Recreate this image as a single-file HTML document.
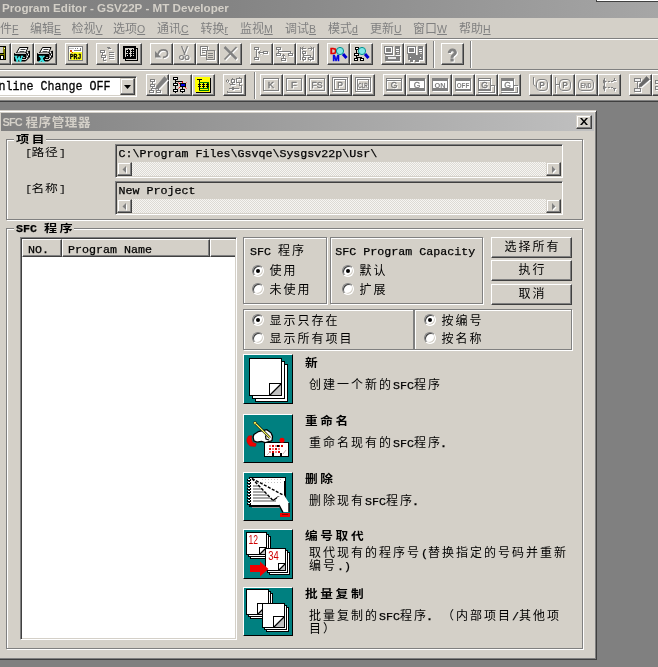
<!DOCTYPE html>
<html lang="zh"><head><meta charset="utf-8"><title>SFC</title>
<style>
*{box-sizing:border-box;margin:0;padding:0}
html,body{width:658px;height:667px;overflow:hidden;background:#808080}
body{position:relative;font-family:"Liberation Mono","Noto Sans CJK SC",monospace;font-size:12px;color:#000;line-height:14px}
.a{position:absolute;white-space:nowrap}
.face{background:#d4d0c8}
.ui{font-family:"Liberation Sans","Noto Sans CJK SC",sans-serif}
.mono{font-family:"Liberation Mono","Noto Sans CJK SC",monospace;font-size:11.67px;letter-spacing:0;-webkit-text-stroke:0.25px #000}
.cj{letter-spacing:2px;font-size:12px;font-weight:400}
.b{font-weight:bold}
  .br{display:inline-block;width:5px;font-size:9.5px;-webkit-text-stroke:0;position:relative;top:-0.5px}
.bh{font-weight:700;font-size:12px;letter-spacing:3.4px}
.raised{background:#d4d0c8;border:1px solid;border-color:#fff #404040 #404040 #fff;box-shadow:inset -1px -1px 0 #808080}
.raised2{background:#d4d0c8;border:1px solid;border-color:#d4d0c8 #404040 #404040 #d4d0c8;box-shadow:inset -1px -1px 0 #808080,inset 1px 1px 0 #fff}
.sunken{border:1px solid;border-color:#808080 #fff #fff #808080;box-shadow:inset 1px 1px 0 #404040,inset -1px -1px 0 #d4d0c8}
.etch{border:1px solid #808080;box-shadow:1px 1px 0 #fff,inset 1px 1px 0 #fff}
.tb{position:absolute;width:23px;height:22px;background:#d4d0c8;border:1px solid;border-color:#fff #404040 #404040 #fff;box-shadow:inset -1px -1px 0 #808080}
.tb svg{position:absolute;left:-1px;top:-1px}
.radio{position:absolute;width:12px;height:12px;border-radius:50%;background:#fff;border:1px solid;border-color:#808080 #fff #fff #808080;box-shadow:inset 1px 1px 0 #404040,inset -1px -1px 0 #d4d0c8}
.radio.on::after{content:"";position:absolute;left:3px;top:3px;width:4px;height:4px;border-radius:50%;background:#000}
.dither{background:repeating-conic-gradient(#f6f5f2 0 25%,#dddad4 0 50%) 0 0/2px 2px}
.m{position:absolute;top:21px;height:16px;color:#808080;font-size:12px;line-height:16px;white-space:nowrap}
.m u{text-decoration:underline;font-size:10.5px}
.ico{position:absolute;left:243px;width:50px;background:#008080;border:1px solid;border-color:#fff #000 #000 #fff;overflow:hidden}
</style></head>
<body>
<div style="position:absolute;left:0;top:0;width:658px;height:667px;will-change:transform">
<div class="a" style="left:0;top:0;width:658px;height:18px;background:linear-gradient(to right,#808080 0%,#848484 35%,#a6a6a6 100%)"></div>
<div class="a ui b" style="left:2px;top:1px;font-size:11.65px;line-height:14px;color:#d4d0c8">Program Editor - GSV22P - MT Developer</div>
<div class="a" style="left:596px;top:-2px;width:70px;height:4px;background:#fff;border:1px solid #404040"></div>
<div class="a face" style="left:0;top:18px;width:658px;height:83px"></div>
<div class="m ui" style="left:-12px">文件<u>F</u></div>
<div class="m ui" style="left:30px">编辑<u>E</u></div>
<div class="m ui" style="left:71.5px">检视<u>V</u></div>
<div class="m ui" style="left:113px">选项<u>O</u></div>
<div class="m ui" style="left:157px">通讯<u>C</u></div>
<div class="m ui" style="left:200.5px">转换<u>r</u></div>
<div class="m ui" style="left:240px">监视<u>M</u></div>
<div class="m ui" style="left:285px">调试<u>B</u></div>
<div class="m ui" style="left:328px">模式<u>d</u></div>
<div class="m ui" style="left:370px">更新<u>U</u></div>
<div class="m ui" style="left:413px">窗口<u>W</u></div>
<div class="m ui" style="left:459px">帮助<u>H</u></div>
<div class="a" style="left:0;top:38px;width:658px;height:1px;background:#808080"></div>
<div class="a" style="left:0;top:39px;width:658px;height:1px;background:#fff"></div>
<div class="a" style="left:0;top:69px;width:658px;height:1px;background:#808080"></div>
<div class="a" style="left:0;top:70px;width:658px;height:1px;background:#fff"></div>
<div class="a" style="left:0;top:100px;width:658px;height:1px;background:#808080"></div>
<div class="a" style="left:0;top:101px;width:658px;height:1px;background:#404040"></div>
<div class="tb" style="left:-12px;top:43px"><svg width="23" height="22" viewBox="0 0 23 22" shape-rendering="crispEdges"><rect x="3.5" y="3.5" width="14" height="13" fill="#808000" stroke="#000"/><rect x="6" y="4" width="9" height="6" fill="#d4d0c8"/><rect x="4" y="10" width="12" height="1" fill="#000"/><rect x="7" y="12" width="9" height="5" fill="#000"/><rect x="13" y="13" width="2" height="3" fill="#fff"/><rect x="16" y="5" width="1" height="1" fill="#fff"/></svg></div>
<div class="tb" style="left:11px;top:43px"><svg width="23" height="22" viewBox="0 0 23 22" shape-rendering="crispEdges"><path d="M3.5 10.5H14.5L18.5 8V14L14.5 18H3.5Z" stroke="#000" fill="#000" stroke-width="1" shape-rendering="geometricPrecision"/><path d="M15 11.5L18 9V13.5L15 17Z" stroke="none" fill="#686868" stroke-width="0" shape-rendering="geometricPrecision"/><rect x="16" y="9" width="1" height="1" fill="#fff"/><rect x="17" y="11" width="1" height="1" fill="#fff"/><rect x="16" y="13" width="1" height="1" fill="#fff"/><rect x="15" y="15" width="1" height="1" fill="#fff"/><rect x="16" y="11" width="1" height="1" fill="#000"/><rect x="17" y="13" width="1" height="1" fill="#000"/><path d="M8.5 4.5H17L14.5 10H5.5Z" stroke="#000" fill="#fff" stroke-width="1" shape-rendering="geometricPrecision"/><path d="M9.5 6.5H14.5M8.5 8.5H13.5" stroke="#303030" fill="none" stroke-width="0.9" shape-rendering="geometricPrecision"/><rect x="4" y="10" width="11" height="1" fill="#c8c8c8"/><rect x="11" y="16" width="4" height="1" fill="#d4d0c8"/><rect x="12" y="14" width="2" height="1" fill="#a0a0a0"/><text x="7.8" y="19" font-family="Liberation Serif, sans-serif" font-size="8.5" font-weight="bold" fill="#40e8e8" text-anchor="middle" shape-rendering="geometricPrecision" stroke="#40e8e8" stroke-width="0.6">W</text></svg></div>
<div class="tb" style="left:34px;top:43px"><svg width="23" height="22" viewBox="0 0 23 22" shape-rendering="crispEdges"><path d="M3.5 10.5H14.5L18.5 8V14L14.5 18H3.5Z" stroke="#000" fill="#000" stroke-width="1" shape-rendering="geometricPrecision"/><path d="M15 11.5L18 9V13.5L15 17Z" stroke="none" fill="#686868" stroke-width="0" shape-rendering="geometricPrecision"/><rect x="16" y="9" width="1" height="1" fill="#fff"/><rect x="17" y="11" width="1" height="1" fill="#fff"/><rect x="16" y="13" width="1" height="1" fill="#fff"/><rect x="15" y="15" width="1" height="1" fill="#fff"/><rect x="16" y="11" width="1" height="1" fill="#000"/><rect x="17" y="13" width="1" height="1" fill="#000"/><path d="M8.5 4.5H17L14.5 10H5.5Z" stroke="#000" fill="#fff" stroke-width="1" shape-rendering="geometricPrecision"/><path d="M9.5 6.5H14.5M8.5 8.5H13.5" stroke="#303030" fill="none" stroke-width="0.9" shape-rendering="geometricPrecision"/><rect x="4" y="10" width="11" height="1" fill="#c8c8c8"/><rect x="11" y="16" width="4" height="1" fill="#d4d0c8"/><rect x="12" y="14" width="2" height="1" fill="#a0a0a0"/><text x="7.8" y="19" font-family="Liberation Serif, sans-serif" font-size="8.5" font-weight="bold" fill="#40e8e8" text-anchor="middle" shape-rendering="geometricPrecision" stroke="#40e8e8" stroke-width="0.6">X</text></svg></div>
<div class="tb" style="left:65px;top:43px"><svg width="23" height="22" viewBox="0 0 23 22" shape-rendering="crispEdges"><rect x="3.5" y="3.5" width="14" height="14" fill="#fff" stroke="#808080"/><rect x="4" y="9" width="13" height="8" fill="#ffff20"/><rect x="4" y="9" width="2" height="8" fill="#ffffc0"/><rect x="4" y="5" width="5" height="1" fill="#c0c0c0"/><rect x="9" y="7" width="6" height="1" fill="#808080"/><rect x="15" y="5" width="1" height="3" fill="#808080"/><rect x="10" y="5" width="1" height="1" fill="#808080"/><rect x="12" y="5" width="1" height="1" fill="#808080"/><rect x="5" y="7" width="2" height="2" fill="#e04000"/><rect x="7" y="9" width="1" height="1" fill="#e04000"/><text x="10.5" y="16" font-family="Liberation Mono, sans-serif" font-size="7.5" font-weight="bold" fill="#000" text-anchor="middle" shape-rendering="geometricPrecision" textLength="11.5" lengthAdjust="spacingAndGlyphs" stroke="#000" stroke-width="0.3">PRJ</text></svg></div>
<div class="tb" style="left:96px;top:43px"><svg width="23" height="22" viewBox="0 0 23 22" shape-rendering="crispEdges" style="filter:drop-shadow(1px 1px 0 #fff)"><rect x="4.5" y="7.5" width="4" height="2" fill="none" stroke="#808080"/><rect x="6" y="10" width="1" height="2" fill="#808080"/><rect x="5.5" y="12.5" width="4" height="2" fill="none" stroke="#808080"/><rect x="7" y="15" width="1" height="2" fill="#808080"/><rect x="7" y="17" width="3" height="1" fill="#808080"/><path d="M10.5 4.5H13.5V6" stroke="#808080" fill="none" stroke-width="1"/><rect x="12" y="5" width="3" height="1" fill="#808080"/><rect x="13" y="9" width="5" height="1" fill="#808080"/><rect x="13" y="11" width="5" height="1" fill="#808080"/><rect x="13" y="13" width="5" height="1" fill="#808080"/><rect x="13" y="15" width="5" height="1" fill="#808080"/></svg></div>
<div class="tb" style="left:119px;top:43px"><svg width="23" height="22" viewBox="0 0 23 22" shape-rendering="crispEdges"><rect x="6.5" y="5.5" width="12" height="12" fill="#d4d0c8" stroke="#000"/><rect x="6" y="17" width="13" height="1" fill="#000"/><rect x="18" y="5" width="1" height="13" fill="#000"/><rect x="4.5" y="3.5" width="12" height="12" fill="#d4d0c8" stroke="#000"/><rect x="5.5" y="4.5" width="10" height="10" fill="none" stroke="#000"/><rect x="7.5" y="7.5" width="3" height="2" fill="#fff" stroke="#000"/><rect x="7.5" y="11.5" width="3" height="2" fill="#fff" stroke="#000"/><rect x="9" y="6" width="1" height="8" fill="#000"/><rect x="12" y="7" width="3" height="1" fill="#000"/><rect x="12" y="9" width="3" height="1" fill="#000"/><rect x="12" y="11" width="3" height="1" fill="#000"/><rect x="12" y="13" width="3" height="1" fill="#000"/><rect x="13" y="6" width="1" height="9" fill="#000"/></svg></div>
<div class="tb" style="left:150px;top:43px"><svg width="23" height="22" viewBox="0 0 23 22" shape-rendering="crispEdges" style="filter:drop-shadow(1px 1px 0 #fff)"><path d="M8 11.5Q9 6.8 13.5 6.8Q17.6 6.8 17.6 10.6Q17.6 14.2 13 14.4" stroke="#808080" fill="none" stroke-width="1.7" shape-rendering="geometricPrecision"/><path d="M5 8V14.5H11.5Z" stroke="#808080" fill="#808080" stroke-width="0" shape-rendering="geometricPrecision"/></svg></div>
<div class="tb" style="left:173px;top:43px"><svg width="23" height="22" viewBox="0 0 23 22" shape-rendering="crispEdges" style="filter:drop-shadow(1px 1px 0 #fff)"><path d="M8.5 3L12 12M14.5 3L11 12" stroke="#808080" fill="none" stroke-width="1.2" shape-rendering="geometricPrecision"/><circle cx="8.5" cy="14.5" r="2" fill="none" stroke="#808080" stroke-width="1.2" shape-rendering="geometricPrecision"/><circle cx="14" cy="14.5" r="2" fill="none" stroke="#808080" stroke-width="1.2" shape-rendering="geometricPrecision"/></svg></div>
<div class="tb" style="left:196px;top:43px"><svg width="23" height="22" viewBox="0 0 23 22" shape-rendering="crispEdges" style="filter:drop-shadow(1px 1px 0 #fff)"><rect x="4.5" y="3.5" width="7" height="9" fill="none" stroke="#808080"/><rect x="6" y="5" width="4" height="1" fill="#808080"/><rect x="6" y="7" width="4" height="1" fill="#808080"/><rect x="6" y="9" width="3" height="1" fill="#808080"/><rect x="10.5" y="7.5" width="8" height="9" fill="#d4d0c8" stroke="#808080"/><rect x="12" y="10" width="5" height="1" fill="#808080"/><rect x="12" y="12" width="5" height="1" fill="#808080"/><rect x="12" y="14" width="5" height="1" fill="#808080"/></svg></div>
<div class="tb" style="left:219px;top:43px"><svg width="23" height="22" viewBox="0 0 23 22" shape-rendering="crispEdges" style="filter:drop-shadow(1px 1px 0 #fff)"><path d="M5.5 4L17.5 16" stroke="#808080" fill="none" stroke-width="2.5" shape-rendering="geometricPrecision"/><path d="M17.5 4L5.5 16.5" stroke="#808080" fill="none" stroke-width="1.7" shape-rendering="geometricPrecision"/></svg></div>
<div class="tb" style="left:250px;top:43px"><svg width="23" height="22" viewBox="0 0 23 22" shape-rendering="crispEdges" style="filter:drop-shadow(1px 1px 0 #fff)"><rect x="4.5" y="4.5" width="4" height="2" fill="none" stroke="#808080"/><rect x="6" y="7" width="1" height="7" fill="#808080"/><rect x="4.5" y="14.5" width="4" height="2" fill="none" stroke="#808080"/><rect x="8" y="9" width="6" height="1" fill="#808080"/><path d="M10.5 7.5L8.5 9.5L10.5 11.5" stroke="#808080" fill="none" stroke-width="1" shape-rendering="geometricPrecision"/><rect x="13.5" y="8.5" width="4" height="2" fill="none" stroke="#808080"/></svg></div>
<div class="tb" style="left:273px;top:43px"><svg width="23" height="22" viewBox="0 0 23 22" shape-rendering="crispEdges" style="filter:drop-shadow(1px 1px 0 #fff)"><rect x="3.5" y="4.5" width="4" height="2" fill="none" stroke="#808080"/><rect x="5" y="7" width="1" height="3" fill="#808080"/><rect x="5" y="8" width="12" height="1" fill="#808080"/><rect x="3.5" y="10.5" width="4" height="2" fill="none" stroke="#808080"/><rect x="15.5" y="10.5" width="4" height="2" fill="none" stroke="#808080"/><rect x="17" y="8" width="1" height="2" fill="#808080"/><rect x="8.5" y="15.5" width="4" height="2" fill="none" stroke="#808080"/><rect x="10" y="11" width="1" height="4" fill="#808080"/><path d="M8.5 13.5L10.5 11.5L12.5 13.5" stroke="#808080" fill="none" stroke-width="1" shape-rendering="geometricPrecision"/></svg></div>
<div class="tb" style="left:296px;top:43px"><svg width="23" height="22" viewBox="0 0 23 22" shape-rendering="crispEdges" style="filter:drop-shadow(1px 1px 0 #fff)"><rect x="4" y="4" width="1" height="13" fill="#808080"/><rect x="17" y="4" width="1" height="13" fill="#808080"/><rect x="6" y="5" width="4" height="1" fill="#808080"/><path d="M7.5 3.5L5.5 5.5L7.5 7.5" stroke="#808080" fill="none" stroke-width="1" shape-rendering="geometricPrecision"/><rect x="12" y="5" width="4" height="1" fill="#808080"/><path d="M14.5 3.5L16.5 5.5L14.5 7.5" stroke="#808080" fill="none" stroke-width="1" shape-rendering="geometricPrecision"/><rect x="6.5" y="8.5" width="3" height="2" fill="none" stroke="#808080"/><rect x="7" y="11" width="1" height="2" fill="#808080"/><rect x="7" y="12" width="8" height="1" fill="#808080"/><rect x="7" y="13" width="1" height="1" fill="#808080"/><rect x="14" y="13" width="1" height="1" fill="#808080"/><rect x="6.5" y="14.5" width="3" height="2" fill="none" stroke="#808080"/><rect x="7" y="17" width="1" height="1" fill="#808080"/><rect x="12.5" y="14.5" width="4" height="2" fill="none" stroke="#808080"/><rect x="14" y="17" width="1" height="1" fill="#808080"/></svg></div>
<div class="tb" style="left:327px;top:43px"><svg width="23" height="22" viewBox="0 0 23 22" shape-rendering="crispEdges"><text x="6.5" y="11" font-family="Liberation Sans, sans-serif" font-size="9.5" font-weight="bold" fill="#e00000" text-anchor="middle" shape-rendering="geometricPrecision" stroke="#e00000" stroke-width="0.5">D</text><text x="9" y="18" font-family="Liberation Sans, sans-serif" font-size="8.5" font-weight="bold" fill="#0000e0" text-anchor="middle" shape-rendering="geometricPrecision" stroke="#0000e0" stroke-width="0.5">M</text><circle cx="13" cy="8" r="3.6" fill="#7fe8e8" stroke="#009090" stroke-width="1" shape-rendering="geometricPrecision"/><path d="M16 11L19.5 15" stroke="#0000d0" fill="none" stroke-width="3" shape-rendering="geometricPrecision"/></svg></div>
<div class="tb" style="left:350px;top:43px"><svg width="23" height="22" viewBox="0 0 23 22" shape-rendering="crispEdges"><rect x="5.5" y="4.5" width="3" height="2" fill="#fff" stroke="#000"/><rect x="6" y="7" width="1" height="3" fill="#000"/><rect x="4.5" y="10.5" width="4" height="2" fill="#fff" stroke="#000"/><rect x="6" y="13" width="1" height="2" fill="#000"/><rect x="6" y="14" width="6" height="1" fill="#000"/><rect x="4.5" y="15.5" width="3" height="2" fill="#fff" stroke="#000"/><rect x="10.5" y="15.5" width="3" height="2" fill="#fff" stroke="#000"/><circle cx="12" cy="8" r="3.6" fill="#7fe8e8" stroke="#009090" stroke-width="1" shape-rendering="geometricPrecision"/><path d="M15 11L18.5 15" stroke="#0000d0" fill="none" stroke-width="3" shape-rendering="geometricPrecision"/></svg></div>
<div class="tb" style="left:381px;top:43px"><svg width="23" height="22" viewBox="0 0 23 22" shape-rendering="crispEdges" style="filter:drop-shadow(1px 1px 0 #fff)"><rect x="3.5" y="3.5" width="8" height="7" fill="#fff" stroke="#808080"/><rect x="5" y="5" width="5" height="4" fill="#808080"/><rect x="14" y="3" width="5" height="9" fill="#808080"/><rect x="15" y="6" width="3" height="1" fill="#fff"/><rect x="15" y="8" width="3" height="1" fill="#fff"/><rect x="16" y="10" width="2" height="1" fill="#d4d0c8"/><rect x="4" y="11" width="8" height="1" fill="#808080"/><rect x="4" y="13" width="15" height="5" fill="#808080"/><rect x="7" y="14" width="8" height="2" fill="#e8e8e8"/></svg></div>
<div class="tb" style="left:404px;top:43px"><svg width="23" height="22" viewBox="0 0 23 22" shape-rendering="crispEdges" style="filter:drop-shadow(1px 1px 0 #fff)"><rect x="3.5" y="3.5" width="8" height="7" fill="#fff" stroke="#808080"/><rect x="5" y="5" width="5" height="4" fill="#808080"/><rect x="14" y="3" width="5" height="9" fill="#808080"/><rect x="15" y="6" width="3" height="1" fill="#fff"/><rect x="15" y="8" width="3" height="1" fill="#fff"/><rect x="16" y="10" width="2" height="1" fill="#d4d0c8"/><rect x="4" y="11" width="8" height="1" fill="#808080"/><rect x="4" y="12" width="15" height="5" fill="#808080"/><rect x="6" y="14" width="1" height="1" fill="#fff"/><rect x="16" y="14" width="1" height="1" fill="#fff"/><rect x="6" y="17" width="3" height="2" fill="#808080"/><rect x="11" y="17" width="4" height="2" fill="#808080"/></svg></div>
<div class="tb" style="left:441px;top:43px"><svg width="23" height="22" viewBox="0 0 23 22" shape-rendering="crispEdges" style="filter:drop-shadow(1px 1px 0 #fff)"><text x="11.5" y="17.5" font-family="Liberation Sans, sans-serif" font-size="16" font-weight="bold" fill="#808080" text-anchor="middle" shape-rendering="geometricPrecision" stroke="#808080" stroke-width="0.8">?</text></svg></div>
<div class="a" style="left:433px;top:41px;width:1px;height:27px;background:#808080"></div><div class="a" style="left:434px;top:41px;width:1px;height:27px;background:#fff"></div>
<div class="a" style="left:470px;top:41px;width:1px;height:27px;background:#808080"></div><div class="a" style="left:471px;top:41px;width:1px;height:27px;background:#fff"></div>
<div class="a sunken" style="left:-40px;top:76px;width:177px;height:21px;background:#fff"></div>
<div class="a mono" style="left:-8.5px;top:80px;font-size:11.67px;line-height:14px;transform:scaleY(1.14);transform-origin:0 50%">Online Change OFF</div>
<div class="a raised2" style="left:120px;top:78px;width:15px;height:17px"><svg class="a" style="left:3px;top:6px" width="7" height="4"><path d="M0 0h7L3.5 4z" fill="#000"/></svg></div>
<div class="tb" style="left:146px;top:74px"><svg width="23" height="22" viewBox="0 0 23 22" shape-rendering="crispEdges" style="filter:drop-shadow(1px 1px 0 #fff)"><rect x="4.5" y="5.5" width="4" height="2" fill="none" stroke="#808080"/><rect x="6" y="8" width="1" height="2" fill="#808080"/><rect x="4.5" y="10.5" width="4" height="2" fill="none" stroke="#808080"/><rect x="6" y="13" width="1" height="2" fill="#808080"/><rect x="5" y="14" width="8" height="1" fill="#808080"/><rect x="5" y="15" width="1" height="1" fill="#808080"/><rect x="12" y="15" width="1" height="1" fill="#808080"/><rect x="3.5" y="16.5" width="4" height="2" fill="none" stroke="#808080"/><rect x="10.5" y="16.5" width="4" height="2" fill="none" stroke="#808080"/><path d="M18.5 2.5L21.5 5.5L13 14.5L9.5 15.5L10.5 12Z" stroke="#808080" fill="#808080" stroke-width="0.5" shape-rendering="geometricPrecision"/></svg></div>
<div class="tb" style="left:169px;top:74px"><svg width="23" height="22" viewBox="0 0 23 22" shape-rendering="crispEdges"><rect x="4.5" y="3.5" width="4" height="2" fill="#fff" stroke="#000"/><rect x="6" y="6" width="1" height="3" fill="#000"/><rect x="4.5" y="9.5" width="4" height="2" fill="#fff" stroke="#000"/><rect x="6" y="12" width="1" height="3" fill="#000"/><rect x="4.5" y="15.5" width="4" height="2" fill="#fff" stroke="#000"/><rect x="6" y="18" width="1" height="1" fill="#000"/><rect x="7" y="7" width="7" height="1" fill="#000"/><rect x="13" y="7" width="1" height="8" fill="#000"/><path d="M9.5 8.5l1.5 1.5M17.5 8.5l-1.5 1.5M9.5 14.5l1.5 -1.5M17.5 14.5l-1.5 -1.5M13.5 7.5v1.5" stroke="#f00" fill="none" stroke-width="1" shape-rendering="geometricPrecision"/><rect x="11.5" y="9.5" width="5" height="3" fill="#0000e0" stroke="#000"/><rect x="11.5" y="15.5" width="4" height="2" fill="#fff" stroke="#000"/><rect x="13" y="18" width="1" height="1" fill="#000"/></svg></div>
<div class="tb" style="left:192px;top:74px"><svg width="23" height="22" viewBox="0 0 23 22" shape-rendering="crispEdges"><rect x="4" y="4" width="15" height="15" fill="#000"/><rect x="3" y="3" width="15" height="15" fill="#ffff00"/><rect x="5" y="5" width="5" height="1" fill="#000"/><rect x="7" y="5" width="1" height="12" fill="#000"/><rect x="7" y="8" width="10" height="1" fill="#008000"/><rect x="7" y="16" width="10" height="1" fill="#008000"/><rect x="16" y="8" width="1" height="9" fill="#008000"/><rect x="6" y="10" width="3" height="1" fill="#000"/><rect x="6" y="12" width="3" height="1" fill="#000"/><rect x="10" y="10" width="3" height="1" fill="#000"/><rect x="10" y="12" width="3" height="1" fill="#000"/><rect x="14" y="10" width="3" height="1" fill="#000"/><rect x="14" y="12" width="3" height="1" fill="#000"/><rect x="11" y="9" width="1" height="5" fill="#000"/><rect x="15" y="9" width="1" height="5" fill="#000"/><rect x="8" y="14" width="9" height="1" fill="#008000"/></svg></div>
<div class="tb" style="left:223px;top:74px"><svg width="23" height="22" viewBox="0 0 23 22" shape-rendering="crispEdges" style="filter:drop-shadow(1px 1px 0 #fff)"><path d="M4.5 5.5L6 7L4.5 8.5L3 7Z" stroke="#808080" fill="none" stroke-width="1" shape-rendering="geometricPrecision"/><path d="M6 9L8 12" stroke="#808080" fill="none" stroke-width="1" shape-rendering="geometricPrecision" stroke-dasharray="1 1"/><rect x="8.5" y="5.5" width="3" height="3" fill="none" stroke="#808080"/><rect x="9" y="4" width="1" height="1" fill="#808080"/><rect x="9" y="9" width="1" height="1" fill="#808080"/><rect x="7" y="10" width="5" height="1" fill="#808080"/><rect x="13.5" y="4.5" width="5" height="4" fill="none" stroke="#808080"/><rect x="16" y="3" width="1" height="1" fill="#808080"/><rect x="16" y="9" width="1" height="3" fill="#808080"/><rect x="16" y="11" width="2" height="1" fill="#808080"/><rect x="18" y="11" width="1" height="8" fill="#808080"/><rect x="4" y="18" width="15" height="1" fill="#808080"/><rect x="4" y="17" width="1" height="1" fill="#808080"/><rect x="6" y="14" width="10" height="1" fill="#808080"/><rect x="9" y="13" width="2" height="3" fill="#808080"/></svg></div>
<div class="tb" style="left:260px;top:74px"><svg width="23" height="22" viewBox="0 0 23 22" shape-rendering="crispEdges" style="filter:drop-shadow(1px 1px 0 #fff)"><rect x="3.5" y="4.5" width="15" height="12" fill="none" stroke="#808080"/><text x="11" y="14" font-family="Liberation Sans, sans-serif" font-size="9.5" font-weight="normal" fill="#787878" text-anchor="middle" shape-rendering="geometricPrecision" stroke="#787878" stroke-width="0.35">K</text></svg></div>
<div class="tb" style="left:283px;top:74px"><svg width="23" height="22" viewBox="0 0 23 22" shape-rendering="crispEdges" style="filter:drop-shadow(1px 1px 0 #fff)"><rect x="3.5" y="4.5" width="15" height="12" fill="none" stroke="#808080"/><text x="11" y="14" font-family="Liberation Sans, sans-serif" font-size="9.5" font-weight="normal" fill="#787878" text-anchor="middle" shape-rendering="geometricPrecision" stroke="#787878" stroke-width="0.35">F</text></svg></div>
<div class="tb" style="left:306px;top:74px"><svg width="23" height="22" viewBox="0 0 23 22" shape-rendering="crispEdges" style="filter:drop-shadow(1px 1px 0 #fff)"><rect x="3.5" y="4.5" width="15" height="12" fill="none" stroke="#808080"/><text x="11" y="14" font-family="Liberation Sans, sans-serif" font-size="9" font-weight="normal" fill="#787878" text-anchor="middle" shape-rendering="geometricPrecision" textLength="11" lengthAdjust="spacingAndGlyphs" stroke="#787878" stroke-width="0.35">FS</text></svg></div>
<div class="tb" style="left:329px;top:74px"><svg width="23" height="22" viewBox="0 0 23 22" shape-rendering="crispEdges" style="filter:drop-shadow(1px 1px 0 #fff)"><rect x="3.5" y="3.5" width="15" height="14" fill="none" stroke="#808080"/><rect x="5.5" y="5.5" width="11" height="10" fill="none" stroke="#808080"/><text x="11" y="14" font-family="Liberation Sans, sans-serif" font-size="8.5" font-weight="normal" fill="#787878" text-anchor="middle" shape-rendering="geometricPrecision" stroke="#787878" stroke-width="0.35">P</text></svg></div>
<div class="tb" style="left:352px;top:74px"><svg width="23" height="22" viewBox="0 0 23 22" shape-rendering="crispEdges" style="filter:drop-shadow(1px 1px 0 #fff)"><rect x="3.5" y="3.5" width="15" height="14" fill="none" stroke="#808080"/><rect x="5.5" y="5.5" width="11" height="10" fill="none" stroke="#808080"/><text x="11" y="14" font-family="Liberation Sans, sans-serif" font-size="7.5" font-weight="normal" fill="#787878" text-anchor="middle" shape-rendering="geometricPrecision" textLength="9.5" lengthAdjust="spacingAndGlyphs" stroke="#787878" stroke-width="0.35">CLR</text></svg></div>
<div class="tb" style="left:383px;top:74px"><svg width="23" height="22" viewBox="0 0 23 22" shape-rendering="crispEdges" style="filter:drop-shadow(1px 1px 0 #fff)"><rect x="3.5" y="4.5" width="15" height="12" fill="none" stroke="#808080"/><rect x="3" y="6" width="16" height="1" fill="#808080"/><rect x="3" y="15" width="16" height="1" fill="#808080"/><text x="11" y="14" font-family="Liberation Sans, sans-serif" font-size="8.5" font-weight="normal" fill="#787878" text-anchor="middle" shape-rendering="geometricPrecision" stroke="#787878" stroke-width="0.35">G</text></svg></div>
<div class="tb" style="left:406px;top:74px"><svg width="23" height="22" viewBox="0 0 23 22" shape-rendering="crispEdges"><rect x="19" y="5" width="1" height="13" fill="#fff"/><rect x="4" y="17" width="16" height="1" fill="#fff"/><rect x="3" y="4" width="16" height="13" fill="#808080"/><rect x="4" y="7" width="14" height="7" fill="#fff"/><text x="11" y="14" font-family="Liberation Sans, sans-serif" font-size="8.5" font-weight="normal" fill="#808080" text-anchor="middle" shape-rendering="geometricPrecision" stroke="#808080" stroke-width="0.3">G</text></svg></div>
<div class="tb" style="left:429px;top:74px"><svg width="23" height="22" viewBox="0 0 23 22" shape-rendering="crispEdges"><rect x="19" y="5" width="1" height="13" fill="#fff"/><rect x="4" y="17" width="16" height="1" fill="#fff"/><rect x="3" y="4" width="16" height="13" fill="#808080"/><rect x="4" y="7" width="14" height="7" fill="#fff"/><text x="11" y="13.5" font-family="Liberation Sans, sans-serif" font-size="8" font-weight="bold" fill="#808080" text-anchor="middle" shape-rendering="geometricPrecision" textLength="11" lengthAdjust="spacingAndGlyphs">ON</text></svg></div>
<div class="tb" style="left:452px;top:74px"><svg width="23" height="22" viewBox="0 0 23 22" shape-rendering="crispEdges"><rect x="19" y="5" width="1" height="13" fill="#fff"/><rect x="4" y="17" width="16" height="1" fill="#fff"/><rect x="3" y="4" width="16" height="13" fill="#808080"/><rect x="4" y="7" width="14" height="8" fill="#fff"/><text x="11" y="13.5" font-family="Liberation Sans, sans-serif" font-size="8" font-weight="bold" fill="#808080" text-anchor="middle" shape-rendering="geometricPrecision" textLength="12.5" lengthAdjust="spacingAndGlyphs">OFF</text></svg></div>
<div class="tb" style="left:475px;top:74px"><svg width="23" height="22" viewBox="0 0 23 22" shape-rendering="crispEdges" style="filter:drop-shadow(1px 1px 0 #fff)"><rect x="3.5" y="4.5" width="12" height="12" fill="none" stroke="#808080"/><rect x="3" y="6" width="13" height="1" fill="#808080"/><rect x="3" y="15" width="13" height="1" fill="#808080"/><text x="9.5" y="14" font-family="Liberation Sans, sans-serif" font-size="8.5" font-weight="normal" fill="#787878" text-anchor="middle" shape-rendering="geometricPrecision" stroke="#787878" stroke-width="0.35">G</text><path d="M15.5 11.5H19.5V18.5H3" stroke="#808080" fill="none" stroke-width="1"/></svg></div>
<div class="tb" style="left:498px;top:74px"><svg width="23" height="22" viewBox="0 0 23 22" shape-rendering="crispEdges"><rect x="16" y="5" width="1" height="13" fill="#fff"/><rect x="4" y="17" width="13" height="1" fill="#fff"/><rect x="3" y="4" width="13" height="13" fill="#808080"/><rect x="4" y="7" width="11" height="7" fill="#fff"/><text x="9.5" y="14" font-family="Liberation Sans, sans-serif" font-size="8.5" font-weight="normal" fill="#808080" text-anchor="middle" shape-rendering="geometricPrecision" stroke="#808080" stroke-width="0.3">G</text><path d="M16 11.5H19.5V18.5H3" stroke="#808080" fill="none" stroke-width="1"/><path d="M17 12.5H20.5V19.5H4" stroke="#fff" fill="none" stroke-width="1"/></svg></div>
<div class="tb" style="left:529px;top:74px"><svg width="23" height="22" viewBox="0 0 23 22" shape-rendering="crispEdges" style="filter:drop-shadow(1px 1px 0 #fff)"><path d="M4.5 3V10.5L7 12.5" stroke="#808080" fill="none" stroke-width="1" shape-rendering="geometricPrecision"/><rect x="7.5" y="5.5" width="11" height="11" rx="3.5" fill="none" stroke="#808080" shape-rendering="geometricPrecision"/><text x="13" y="14" font-family="Liberation Sans, sans-serif" font-size="8.5" font-weight="bold" fill="#787878" text-anchor="middle" shape-rendering="geometricPrecision">P</text></svg></div>
<div class="tb" style="left:552px;top:74px"><svg width="23" height="22" viewBox="0 0 23 22" shape-rendering="crispEdges" style="filter:drop-shadow(1px 1px 0 #fff)"><rect x="3" y="3" width="1" height="16" fill="#808080"/><rect x="4" y="10" width="3" height="1" fill="#808080"/><rect x="7.5" y="5.5" width="11" height="11" rx="3.5" fill="none" stroke="#808080" shape-rendering="geometricPrecision"/><text x="13" y="14" font-family="Liberation Sans, sans-serif" font-size="8.5" font-weight="bold" fill="#787878" text-anchor="middle" shape-rendering="geometricPrecision">P</text></svg></div>
<div class="tb" style="left:575px;top:74px"><svg width="23" height="22" viewBox="0 0 23 22" shape-rendering="crispEdges" style="filter:drop-shadow(1px 1px 0 #fff)"><rect x="3.5" y="5.5" width="15" height="11" rx="3.5" fill="none" stroke="#808080" shape-rendering="geometricPrecision"/><text x="11" y="14" font-family="Liberation Sans, sans-serif" font-size="7" font-weight="bold" fill="#808080" text-anchor="middle" shape-rendering="geometricPrecision" textLength="11" lengthAdjust="spacingAndGlyphs">END</text></svg></div>
<div class="tb" style="left:598px;top:74px"><svg width="23" height="22" viewBox="0 0 23 22" shape-rendering="crispEdges" style="filter:drop-shadow(1px 1px 0 #fff)"><rect x="6" y="4" width="1" height="13" fill="#808080"/><path d="M5 5.5L9 7.5L5 9.5Z" stroke="#808080" fill="#808080" stroke-width="0" shape-rendering="geometricPrecision"/><path d="M5 11.5L9 13.5L5 15.5Z" stroke="#808080" fill="#808080" stroke-width="0" shape-rendering="geometricPrecision"/><rect x="10" y="7" width="2" height="1" fill="#808080"/><rect x="13" y="7" width="2" height="1" fill="#808080"/><rect x="10" y="13" width="2" height="1" fill="#808080"/><rect x="13" y="13" width="2" height="1" fill="#808080"/><rect x="16" y="4" width="1" height="3" fill="#808080"/><rect x="15" y="6" width="3" height="1" fill="#808080"/><rect x="16" y="14" width="1" height="3" fill="#808080"/><rect x="15" y="14" width="3" height="1" fill="#808080"/></svg></div>
<div class="tb" style="left:629px;top:74px"><svg width="23" height="22" viewBox="0 0 23 22" shape-rendering="crispEdges" style="filter:drop-shadow(1px 1px 0 #fff)"><rect x="5.5" y="4.5" width="6" height="3" fill="#f0f0f0" stroke="#808080"/><rect x="8" y="8" width="1" height="6" fill="#808080"/><rect x="5.5" y="14.5" width="6" height="3" fill="#f0f0f0" stroke="#808080"/><path d="M17.5 2.5L20.5 5.5L12.5 12.5L10 13L10.5 10.5Z" stroke="#686868" fill="#686868" stroke-width="0.6" shape-rendering="geometricPrecision"/></svg></div>
<div class="tb" style="left:652px;top:74px"><svg width="23" height="22" viewBox="0 0 23 22" shape-rendering="crispEdges" style="filter:drop-shadow(1px 1px 0 #fff)"><rect x="3.5" y="6.5" width="8" height="3" fill="#f0f0f0" stroke="#808080"/><rect x="3.5" y="12.5" width="8" height="3" fill="#f0f0f0" stroke="#808080"/></svg></div>
<div class="a" style="left:254px;top:72px;width:1px;height:27px;background:#808080"></div><div class="a" style="left:255px;top:72px;width:1px;height:27px;background:#fff"></div>
<div class="a face" style="left:-3px;top:110px;width:600px;height:550px;border:1px solid;border-color:#d4d0c8 #404040 #404040 #d4d0c8;box-shadow:inset 1px 1px 0 #fff,inset -1px -1px 0 #808080"></div>
<div class="a" style="left:1px;top:113px;width:593px;height:18px;background:linear-gradient(to right,#808080,#c0c0c0)"></div>
<div class="a ui b" style="left:2.5px;top:115px;font-size:11px;line-height:14px;letter-spacing:-0.9px;color:#d4d0c8">SFC</div><div class="a ui b" style="left:25.5px;top:115.5px;font-size:12.5px;line-height:14px;letter-spacing:0.6px;color:#d4d0c8">程序管理器</div>
<div class="a raised2" style="left:576px;top:115px;width:16px;height:14px"><svg class="a" style="left:3px;top:2px" width="8" height="7"><path d="M0 0h2l2 2.5L6 0h2L5 3.5 8 7H6L4 4.5 2 7H0l3-3.5z" fill="#000"/></svg></div>
<div class="a etch" style="left:6px;top:139px;width:577px;height:81px"></div>
<div class="a face bh" style="left:14px;top:132.5px;width:32px;height:14px;padding-left:2px"><span style="display:inline-block;font-size:10.5px;letter-spacing:2px;transform:scale(1.25,1);transform-origin:0 50%">项目</span></div>
<div class="a"  style="left:24.5px;top:146px;transform:scale(1.28,1);transform-origin:0 50%"><span class="mono br">[</span><span class="cj" style="letter-spacing:0.7px;font-size:10px">路径</span><span class="mono br">]</span></div>
<div class="a"  style="left:24.5px;top:182px;transform:scale(1.28,1);transform-origin:0 50%"><span class="mono br">[</span><span class="cj" style="letter-spacing:0.7px;font-size:10px">名称</span><span class="mono br">]</span></div>
<div class="a sunken face" style="left:115px;top:144px;width:448px;height:34px"></div>
<div class="a mono" style="left:118.5px;top:147px">C:\Program Files\Gsvqe\Sysgsv22p\Usr\</div>
<div class="a dither" style="left:117px;top:162px;width:444px;height:14px"></div>
<div class="a raised2" style="left:117px;top:162px;width:15px;height:14px"><svg class="a" style="left:4px;top:3px;filter:drop-shadow(1px 1px 0 #fff)" width="5" height="8"><path d="M4 0v7L0.5 3.5z" fill="#808080"/></svg></div>
<div class="a raised2" style="left:546px;top:162px;width:15px;height:14px"><svg class="a" style="left:5px;top:3px;filter:drop-shadow(1px 1px 0 #fff)" width="5" height="8"><path d="M0 0v7L3.5 3.5z" fill="#808080"/></svg></div>
<div class="a sunken face" style="left:115px;top:181px;width:448px;height:34px"></div>
<div class="a mono" style="left:118.5px;top:184px">New Project</div>
<div class="a dither" style="left:117px;top:199px;width:444px;height:14px"></div>
<div class="a raised2" style="left:117px;top:199px;width:15px;height:14px"><svg class="a" style="left:4px;top:3px;filter:drop-shadow(1px 1px 0 #fff)" width="5" height="8"><path d="M4 0v7L0.5 3.5z" fill="#808080"/></svg></div>
<div class="a raised2" style="left:546px;top:199px;width:15px;height:14px"><svg class="a" style="left:5px;top:3px;filter:drop-shadow(1px 1px 0 #fff)" width="5" height="8"><path d="M0 0v7L3.5 3.5z" fill="#808080"/></svg></div>
<div class="a etch" style="left:6px;top:228px;width:577px;height:421px"></div>
<div class="a face bh" style="left:14px;top:222px;width:60px;height:14px;padding-left:2px"><span class="mono b" style="letter-spacing:0">SFC </span><span style="display:inline-block;font-size:10.5px;letter-spacing:2px;transform:scale(1.25,1);transform-origin:0 50%">程序</span></div>
<div class="a sunken" style="left:20px;top:237px;width:217px;height:403px;background:#fff"></div>
<div class="a" style="left:22px;top:239px;width:213px;height:18px;overflow:hidden">
<div class="a raised mono" style="left:0px;top:0;width:40px;height:18px;padding:3px 0 0 5px">NO.</div>
<div class="a raised mono" style="left:40px;top:0;width:148px;height:18px;padding:3px 0 0 5px">Program Name</div>
<div class="a raised mono" style="left:188px;top:0;width:60px;height:18px;padding:3px 0 0 5px"></div>
</div>
<div class="a etch" style="left:243px;top:237px;width:84px;height:67px"></div>
<div class="a etch" style="left:330px;top:237px;width:153px;height:67px"></div>
<div class="a" style="left:250px;top:245px"><span class="mono">SFC </span><span class="cj">程序</span></div>
<div class="a mono" style="left:335.3px;top:245px">SFC Program Capacity</div>
<div class="radio on" style="left:252px;top:265px"></div>
<div class="a cj" style="left:269.5px;top:265px">使用</div>
<div class="radio" style="left:252px;top:283px"></div>
<div class="a cj" style="left:269.5px;top:283.5px">未使用</div>
<div class="radio on" style="left:342px;top:265px"></div>
<div class="a cj" style="left:359.5px;top:265px">默认</div>
<div class="radio" style="left:342px;top:283px"></div>
<div class="a cj" style="left:359.5px;top:283.5px">扩展</div>
<div class="a raised cj" style="left:491px;top:237px;width:81px;height:21px;text-align:center;padding-top:3px;padding-left:2px">选择所有</div>
<div class="a raised cj" style="left:491px;top:260px;width:81px;height:21px;text-align:center;padding-top:3px;padding-left:2px">执行</div>
<div class="a raised cj" style="left:491px;top:284px;width:81px;height:21px;text-align:center;padding-top:3px;padding-left:2px">取消</div>
<div class="a etch" style="left:243px;top:309px;width:171px;height:41px"></div>
<div class="a etch" style="left:414px;top:309px;width:158px;height:41px"></div>
<div class="radio on" style="left:252px;top:314px"></div>
<div class="a cj" style="left:269.5px;top:314.5px">显示只存在</div>
<div class="radio" style="left:252px;top:332px"></div>
<div class="a cj" style="left:269.5px;top:332.5px">显示所有项目</div>
<div class="radio on" style="left:424px;top:314px"></div>
<div class="a cj" style="left:441.5px;top:314.5px">按编号</div>
<div class="radio" style="left:424px;top:332px"></div>
<div class="a cj" style="left:441.5px;top:332.5px">按名称</div>
<div class="ico" style="top:354px;height:50px"><svg style="position:absolute;left:-1px;top:-1px" width="50" height="50" viewBox="0 0 50 50" shape-rendering="crispEdges"><rect x="12.5" y="10.5" width="32" height="37" fill="#fff" stroke="#000"/><rect x="9.5" y="7.5" width="32" height="37" fill="#fff" stroke="#000"/><rect x="6.5" y="4.5" width="32" height="37" fill="#fff" stroke="#000"/><path d="M27 41L38 30V41Z" stroke="none" fill="#c0c0c0" stroke-width="0" shape-rendering="geometricPrecision"/><path d="M26.5 41.5V29.5H38" stroke="#000" fill="none" stroke-width="1"/><path d="M27 41L38 30" stroke="#000" fill="none" stroke-width="1.2" shape-rendering="geometricPrecision"/></svg></div>
<div class="a bh" style="left:304.5px;top:356.8px;font-size:11px;letter-spacing:2.3px;transform:scale(1.15,1);transform-origin:0 50%">新</div>
<div class="a cj" style="left:309px;top:379px">创建一个新的<span class="mono">SFC</span>程序</div>
<div class="ico" style="top:414px;height:49px"><svg style="position:absolute;left:-1px;top:-1px" width="50" height="50" viewBox="0 0 50 50" shape-rendering="crispEdges"><rect x="21.5" y="28.5" width="24" height="14" fill="#fff" stroke="#000"/><rect x="29" y="39" width="2" height="3" fill="#000"/><rect x="37" y="39" width="2" height="3" fill="#000"/><rect x="26" y="31" width="2" height="2" fill="#f08080"/><rect x="29" y="31" width="2" height="2" fill="#e00000"/><rect x="32" y="31" width="2" height="2" fill="#f08080"/><rect x="35" y="31" width="2" height="2" fill="#e00000"/><rect x="26" y="34" width="2" height="2" fill="#e00000"/><rect x="29" y="34" width="2" height="2" fill="#f08080"/><rect x="32" y="34" width="2" height="2" fill="#e00000"/><rect x="35" y="34" width="2" height="2" fill="#f08080"/><rect x="26" y="37" width="2" height="2" fill="#f08080"/><rect x="29" y="37" width="2" height="2" fill="#e00000"/><rect x="32" y="37" width="2" height="2" fill="#f08080"/><rect x="35" y="37" width="2" height="2" fill="#e00000"/><rect x="38" y="31" width="2" height="2" fill="#e00000"/><rect x="34" y="31" width="2" height="2" fill="#000"/><path d="M24 41L28 37M40 40L43 36" stroke="#c0a0a0" fill="none" stroke-width="0.8" shape-rendering="geometricPrecision"/><circle cx="39" cy="26.2" r="2.5" fill="#f00000" shape-rendering="geometricPrecision"/><path d="M5.6 21.9Q3.2 25 4 27.5Q5 30.5 7.1 31.9L12.4 32.3L13.2 29.8L9.4 28.3L8.2 23.8L9 21.9Z" stroke="#d00000" fill="#f00000" stroke-width="0.8" shape-rendering="geometricPrecision"/><path d="M10.9 20.5L15.4 17.5L23.8 15.7L28 18.8L29.5 22.2L29.1 26.3L28.4 27L22.3 28.6L18.5 27.5L13.9 28.2L10.9 26.8L10.1 23Z" stroke="#000" fill="#fff" stroke-width="1.3" shape-rendering="geometricPrecision"/><path d="M22.5 21.5L23 25L26 26" stroke="#000" fill="none" stroke-width="1.2" shape-rendering="geometricPrecision"/><path d="M12.3 9.2L27 23.9" stroke="#000" fill="none" stroke-width="2.4" shape-rendering="geometricPrecision"/><path d="M12.3 9.2L27 23.9" stroke="#ffff60" fill="none" stroke-width="1.3" shape-rendering="geometricPrecision"/><circle cx="12" cy="8.9" r="1.5" fill="#ffff60" stroke="#000" stroke-width="0.5" shape-rendering="geometricPrecision"/></svg></div>
<div class="a bh" style="left:304.5px;top:414.8px;font-size:11px;letter-spacing:2.3px;transform:scale(1.15,1);transform-origin:0 50%">重命名</div>
<div class="a cj" style="left:309px;top:436.5px">重命名现有的<span class="mono">SFC</span>程序<span class="mono" style="margin-left:-2px;font-weight:bold">.</span></div>
<div class="ico" style="top:472px;height:49px"><svg style="position:absolute;left:-1px;top:-1px" width="50" height="50" viewBox="0 0 50 50" shape-rendering="crispEdges"><rect x="6.5" y="5.5" width="36" height="28" fill="#fff" stroke="#000"/><rect x="41" y="9" width="2" height="18" fill="#000"/><rect x="6" y="33" width="31" height="2" fill="#000"/><rect x="9" y="35" width="28" height="1" fill="#909090"/><rect x="4" y="7" width="4" height="2" fill="#000"/><rect x="5" y="7" width="2" height="1" fill="#fff"/><rect x="4" y="10" width="4" height="2" fill="#000"/><rect x="5" y="10" width="2" height="1" fill="#fff"/><rect x="4" y="13" width="4" height="2" fill="#000"/><rect x="5" y="13" width="2" height="1" fill="#fff"/><rect x="4" y="16" width="4" height="2" fill="#000"/><rect x="5" y="16" width="2" height="1" fill="#fff"/><rect x="4" y="19" width="4" height="2" fill="#000"/><rect x="5" y="19" width="2" height="1" fill="#fff"/><rect x="4" y="22" width="4" height="2" fill="#000"/><rect x="5" y="22" width="2" height="1" fill="#fff"/><rect x="4" y="25" width="4" height="2" fill="#000"/><rect x="5" y="25" width="2" height="1" fill="#fff"/><rect x="4" y="28" width="4" height="2" fill="#000"/><rect x="5" y="28" width="2" height="1" fill="#fff"/><rect x="4" y="31" width="4" height="2" fill="#000"/><rect x="5" y="31" width="2" height="1" fill="#fff"/><rect x="10" y="13" width="10" height="2" fill="#a8a8a8"/><rect x="10" y="16" width="13" height="2" fill="#a8a8a8"/><rect x="10" y="19" width="16" height="2" fill="#a8a8a8"/><rect x="10" y="22" width="19" height="2" fill="#a8a8a8"/><rect x="10" y="25" width="20" height="2" fill="#a8a8a8"/><rect x="10" y="28" width="23" height="2" fill="#a8a8a8"/><rect x="19" y="7" width="1" height="1" fill="#c0c0c0"/><rect x="19" y="10" width="1" height="1" fill="#c0c0c0"/><rect x="22" y="7" width="1" height="1" fill="#c0c0c0"/><rect x="22" y="10" width="1" height="1" fill="#c0c0c0"/><rect x="25" y="7" width="1" height="1" fill="#c0c0c0"/><rect x="25" y="10" width="1" height="1" fill="#c0c0c0"/><rect x="28" y="7" width="1" height="1" fill="#c0c0c0"/><rect x="28" y="10" width="1" height="1" fill="#c0c0c0"/><rect x="31" y="7" width="1" height="1" fill="#c0c0c0"/><rect x="31" y="10" width="1" height="1" fill="#c0c0c0"/><rect x="34" y="7" width="1" height="1" fill="#c0c0c0"/><rect x="34" y="10" width="1" height="1" fill="#c0c0c0"/><rect x="37" y="7" width="1" height="1" fill="#c0c0c0"/><rect x="37" y="10" width="1" height="1" fill="#c0c0c0"/><path d="M9 6.5L41 23.5L35 27L30 28.5Z" stroke="none" fill="#fff" stroke-width="0" shape-rendering="geometricPrecision"/><path d="M9 6.5L41 23.5" stroke="#000" fill="none" stroke-width="1.4" shape-rendering="geometricPrecision" stroke-dasharray="3 1.5"/><path d="M9 6.5L30 28.5" stroke="#000" fill="none" stroke-width="1.4" shape-rendering="geometricPrecision" stroke-dasharray="3 1.5"/><path d="M30 28.5L35 25L38 26" stroke="#000" fill="none" stroke-width="1.4" shape-rendering="geometricPrecision"/><path d="M34 25.5L41 23L46 31V40H40L36 33Z" stroke="none" fill="#fff" stroke-width="0" shape-rendering="geometricPrecision"/><path d="M36 33L40 40.5M46 31V40" stroke="#000" fill="none" stroke-width="1.4" shape-rendering="geometricPrecision"/><rect x="37" y="41" width="10" height="4" fill="#f00000"/><rect x="39" y="42" width="6" height="1" fill="#900000"/></svg></div>
<div class="a bh" style="left:304.5px;top:472.8px;font-size:11px;letter-spacing:2.3px;transform:scale(1.15,1);transform-origin:0 50%">删除</div>
<div class="a cj" style="left:309px;top:495px">删除现有<span class="mono">SFC</span>程序<span class="mono" style="margin-left:-2px;font-weight:bold">.</span></div>
<div class="ico" style="top:529px;height:50px"><svg style="position:absolute;left:-1px;top:-1px" width="50" height="50" viewBox="0 0 50 50" shape-rendering="crispEdges"><rect x="7.5" y="7.5" width="20" height="22" fill="#fff" stroke="#000"/><rect x="5.5" y="5.5" width="20" height="22" fill="#fff" stroke="#000"/><rect x="3.5" y="3.5" width="20" height="22" fill="#fff" stroke="#000"/><path d="M17 25L23 19V25Z" stroke="none" fill="#c0c0c0" stroke-width="0" shape-rendering="geometricPrecision"/><path d="M16.5 25.5V18.5H23" stroke="#000" fill="none" stroke-width="1"/><path d="M17 25L23 19" stroke="#000" fill="none" stroke-width="1.2" shape-rendering="geometricPrecision"/><text x="10.2" y="14.8" font-family="Liberation Sans, sans-serif" font-size="12" font-weight="normal" fill="#d00000" text-anchor="middle" shape-rendering="geometricPrecision" textLength="9.5" lengthAdjust="spacingAndGlyphs">12</text><rect x="26.5" y="23.5" width="20" height="22" fill="#fff" stroke="#000"/><rect x="24.5" y="21.5" width="20" height="22" fill="#fff" stroke="#000"/><rect x="22.5" y="19.5" width="20" height="22" fill="#fff" stroke="#000"/><path d="M36 41L42 35V41Z" stroke="none" fill="#c0c0c0" stroke-width="0" shape-rendering="geometricPrecision"/><path d="M35.5 41.5V34.5H42" stroke="#000" fill="none" stroke-width="1"/><path d="M36 41L42 35" stroke="#000" fill="none" stroke-width="1.2" shape-rendering="geometricPrecision"/><text x="30.5" y="31" font-family="Liberation Sans, sans-serif" font-size="12" font-weight="normal" fill="#d00000" text-anchor="middle" shape-rendering="geometricPrecision" textLength="10.5" lengthAdjust="spacingAndGlyphs">34</text><path d="M7 36H17V32.5L25.5 40L17 47.5V43H7Z" stroke="none" fill="#f00000" stroke-width="0" shape-rendering="geometricPrecision"/></svg></div>
<div class="a bh" style="left:304.5px;top:529.8px;font-size:11px;letter-spacing:2.3px;transform:scale(1.15,1);transform-origin:0 50%">编号取代</div>
<div class="a cj" style="left:309px;top:546.5px">取代现有的程序号<span class="mono">(</span>替换指定的号码并重新</div>
<div class="a cj" style="left:309px;top:559.5px">编号<span class="mono">.)</span></div>
<div class="ico" style="top:587px;height:49px"><svg style="position:absolute;left:-1px;top:-1px" width="50" height="50" viewBox="0 0 50 50" shape-rendering="crispEdges"><rect x="7.5" y="6.5" width="22" height="25" fill="#fff" stroke="#000"/><rect x="5.5" y="4.5" width="22" height="25" fill="#fff" stroke="#000"/><rect x="3.5" y="2.5" width="22" height="25" fill="#fff" stroke="#000"/><path d="M15 27L25 17V27Z" stroke="none" fill="#c0c0c0" stroke-width="0" shape-rendering="geometricPrecision"/><path d="M14.5 27.5V16.5H25" stroke="#000" fill="none" stroke-width="1"/><path d="M15 27L25 17" stroke="#000" fill="none" stroke-width="1.2" shape-rendering="geometricPrecision"/><rect x="23.5" y="20.5" width="22" height="24" fill="#fff" stroke="#000"/><rect x="21.5" y="18.5" width="22" height="24" fill="#fff" stroke="#000"/><rect x="19.5" y="16.5" width="22" height="24" fill="#fff" stroke="#000"/><path d="M31 40L41 30V40Z" stroke="none" fill="#c0c0c0" stroke-width="0" shape-rendering="geometricPrecision"/><path d="M30.5 40.5V29.5H41" stroke="#000" fill="none" stroke-width="1"/><path d="M31 40L41 30" stroke="#000" fill="none" stroke-width="1.2" shape-rendering="geometricPrecision"/></svg></div>
<div class="a bh" style="left:304.5px;top:587.8px;font-size:11px;letter-spacing:2.3px;transform:scale(1.15,1);transform-origin:0 50%">批量复制</div>
<div class="a cj" style="left:309px;top:610px">批量复制的<span class="mono">SFC</span>程序<span class="mono" style="margin-left:-2px;margin-right:2px;font-weight:bold">. </span>（内部项目<span class="mono">/</span>其他项</div>
<div class="a cj" style="left:309px;top:623px">目）</div>
</div>
</body></html>
